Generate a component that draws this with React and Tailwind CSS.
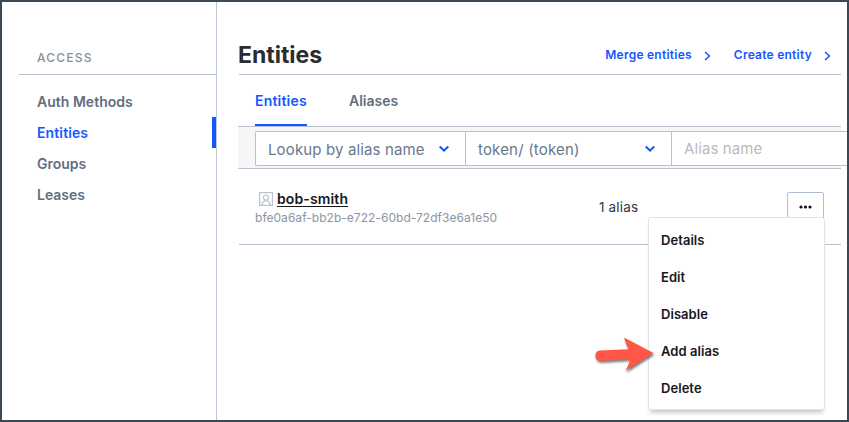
import React from "react";

const navItems = [
  { label: "Auth Methods", spacing: "tracking-[0.02px]" },
  { label: "Entities", active: true, spacing: "tracking-[0.12px]" },
  { label: "Groups", spacing: "tracking-[0px]" },
  { label: "Leases", spacing: "tracking-[0px]" },
];

const menuItems = ["Details", "Edit", "Disable", "Add alias", "Delete"];

function ChevronDown() {
  return (
    <svg width="12" height="8" viewBox="0 0 12 8" fill="none" stroke="#1557ff" strokeWidth="2">
      <path d="M1.7 1.6 6 5.6l4.3-4" />
    </svg>
  );
}

function ChevronRight() {
  return (
    <svg className="mt-[2px]" width="7" height="10" viewBox="0 0 7 10" fill="none" stroke="#1557ff" strokeWidth="1.5">
      <path d="M1 1l4.4 4L1 9" />
    </svg>
  );
}

function UserIcon() {
  return (
    <svg width="14" height="14" viewBox="0 0 14 14" fill="none" stroke="#bac1d1" strokeWidth="1.2">
      <rect x="0.6" y="0.6" width="12.8" height="12.8" />
      <circle cx="7" cy="5.6" r="2.6" />
      <path d="M3.3 13v-2.2L5.8 9V7.8M10.7 13v-2.2L8.2 9V7.8" />
    </svg>
  );
}

function Sidebar() {
  return (
    <aside className="flex w-[215px] shrink-0 flex-col border-r border-[#bac6d6] pl-[17px] pt-[48px]">
      <h2 className="h-[25px] shrink-0 border-b border-[#b7c1d0] pl-[18px] text-[12px] font-medium leading-[16px] tracking-[1.2px] text-[#848fa0]">
        ACCESS
      </h2>
      <nav className="mt-[11px] flex flex-col">
        {navItems.map(({ label, active, spacing }) => (
          <a
            key={label}
            className={`flex h-[31px] items-center pl-[18px] text-[14px] font-semibold ${spacing} ${
              active ? "border-r-4 border-[#1557ff] text-[#1557ff]" : "text-[#626e7d]"
            }`}
          >
            {label}
          </a>
        ))}
      </nav>
    </aside>
  );
}

function ActionMenu() {
  return (
    <ul className="absolute right-[16px] top-[25px] z-10 flex h-[193px] w-[177px] flex-col rounded-[3px] border border-[#e2e3e5] bg-white pt-[4px] shadow-[0_5px_4px_-2px_rgba(0,0,0,0.2)]">
      {menuItems.map((label) => (
        <li key={label} className="flex h-[37px] items-center pl-[12px] text-[13px] font-semibold tracking-[0.05px] text-[#16181c]">
          {label}
        </li>
      ))}
    </ul>
  );
}

function Pointer() {
  return (
    <svg
      className="absolute left-[355px] top-[163px] z-20 drop-shadow-[1px_2px_1px_rgba(0,0,0,0.5)]"
      width="62"
      height="40"
      viewBox="0 0 62 40"
    >
      <path
        d="M5.5 18.5 34.5 17.3Q32 12 30 5.5L59.5 21 31.5 39Q34 34 36.5 27.3L6.5 29C-.5 29 0 19 5.5 18.5Z"
        fill="#ff5648"
      />
    </svg>
  );
}

export default function App() {
  return (
    <div className="flex h-[422px] w-[849px] overflow-hidden border-2 border-[#3b4856] bg-white font-[Inter,sans-serif]">
      <Sidebar />
      <main className="flex min-w-0 flex-1 flex-col pl-[22px] pr-[6px]">
        <header className="flex h-[73px] shrink-0 items-end justify-between border-b border-[#b7c1d0] pb-[4px]">
          <h1 className="-ml-px text-[23px] font-bold leading-[30px] text-[#2b2c2e]">Entities</h1>
          <div className="flex items-center gap-[23px] pb-[5px] pr-[10px] text-[12px] font-semibold leading-[20px] tracking-[0.24px] text-[#1557ff]">
            <a className="flex items-center gap-[12px]">Merge entities <ChevronRight /></a>
            <a className="flex items-center gap-[12px]">Create entity <ChevronRight /></a>
          </div>
        </header>

        <div className="-ml-px flex h-[52px] shrink-0 items-stretch gap-[42px] border-b border-[#b7c1d0] pl-[17px] text-[14px] font-semibold">
          <a className="flex w-[52px] items-center border-b-2 border-[#1557ff] pt-px whitespace-nowrap tracking-[0.2px] text-[#1557ff]">Entities</a>
          <a className="flex items-center border-b-2 border-transparent pt-px text-[#626e7d]">Aliases</a>
        </div>

        <div className="-ml-px flex h-[42px] shrink-0 border-b border-[#b7c1d0] bg-[#f6f6f7] pl-[17px] pt-[4px]">
          <div className="-mr-[6px] flex h-[35px] flex-1 rounded-l-[2px] border border-r-0 border-[#b7c1d0] bg-white text-[15px] text-[#68778b]">
            <div className="flex w-[210px] items-center justify-between border-r border-[#b7c1d0] pl-[12px] pr-[15px]">
              <span className="pt-[3px] tracking-[0.14px]">Lookup by alias name</span>
              <ChevronDown />
            </div>
            <div className="flex w-[206px] items-center justify-between border-r border-[#b7c1d0] pl-[12px] pr-[15px]">
              <span className="pt-[3px] tracking-[0.18px]">token/ (token)</span>
              <ChevronDown />
            </div>
            <div className="flex items-center pl-[12px] pt-[1px] tracking-[0.1px] text-[#b9babc]">Alias name</div>
          </div>
        </div>

        <div className="relative flex h-[76px] shrink-0 border-b border-[#b7c1d0] pl-[16px]">
          <div className="flex w-[344px] flex-col pt-[20px]">
            <div className="flex h-[20px] items-center gap-[4px] pl-[4px]">
              <UserIcon />
              <span className="-mt-px text-[14px] font-semibold leading-[16px] tracking-[0.12px] text-[#16181c] underline decoration-1 underline-offset-2">bob-smith</span>
            </div>
            <span className="text-[12px] leading-[18px] tracking-[0.03px] text-[#8b95a6]">bfe0a6af-bb2b-e722-60bd-72df3e6a1e50</span>
          </div>
          <span className="pt-[28px] text-[13.5px] leading-[20px] tracking-[0.15px] text-[#35373b]">1 alias</span>
          <button className="ml-auto mr-[17px] mt-[23px] flex h-[31px] w-[37px] items-center justify-center rounded-[2px] border border-[#b0bfd6] bg-white pb-[2px]">
            <svg width="13" height="4" viewBox="0 0 13 4" fill="#111">
              <circle cx="2" cy="2" r="1.6" />
              <circle cx="6.5" cy="2" r="1.6" />
              <circle cx="11" cy="2" r="1.6" />
            </svg>
          </button>
          <div className="absolute inset-x-0 top-[23px]">
            <ActionMenu />
          </div>
          <Pointer />
        </div>
      </main>
    </div>
  );
}
